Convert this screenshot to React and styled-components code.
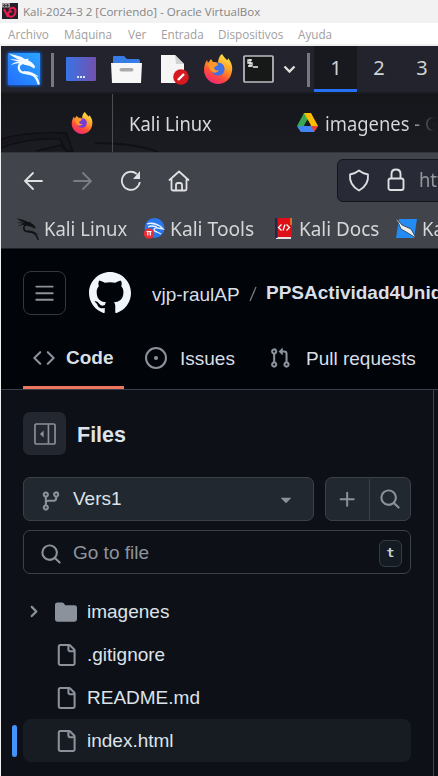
import React from "react";
import styled, { createGlobalStyle } from "styled-components";

const GlobalStyle = createGlobalStyle`
  * { box-sizing: border-box; }
  body { margin: 0; background: #0d1117; overflow: hidden; }
  svg { display: block; flex: none; }
`;

const Window = styled.main`
  width: 438px;
  height: 776px;
  overflow: hidden;
  background: #f2f2f2;
`;

const Label = styled.span`
  flex: none;
  white-space: nowrap;
  margin-left: ${(p) => p.$gap || 0}px;
  margin-top: ${(p) => p.$drop || 0}px;
  width: ${(p) => (p.$width ? `${p.$width}px` : "auto")};
  font-weight: ${(p) => (p.$bold ? 700 : 400)};
`;

const NarrowLabel = styled(Label)`
  transform: scaleX(${(p) => p.$scale || 0.92});
  transform-origin: left center;
`;

const Glyph = styled.svg`
  margin-left: ${(p) => p.$gap || 0}px;
  margin-top: ${(p) => p.$drop || 0}px;
`;

const TitleBar = styled.header`
  display: flex;
  align-items: center;
  height: 23px;
  background: #f2f2f2;
  color: #858585;
  font: 11.55px/22px "Open Sans", "Noto Sans", sans-serif;
`;

const MenuBar = styled.nav`
  display: flex;
  align-items: center;
  height: 23px;
  background: #fff;
  border-bottom: 2px solid #f0f0f0;
  color: #a0a0a0;
  font: 11.7px/20px "Open Sans", "Noto Sans", sans-serif;
`;

const Guest = styled.div`
  height: 730px;
  border-left: 1px solid #f0f0f0;
  background: #0d1117;
  overflow: hidden;
`;

const Panel = styled.div`
  display: flex;
  align-items: center;
  height: 48px;
  background: #22232c;
  border-bottom: 2px solid #1a1b21;
`;

const Divider = styled.i`
  flex: none;
  width: 3px;
  height: 34px;
  margin-top: 1px;
  margin-left: ${(p) => p.$gap}px;
  background: #77787c;
`;

const Workspace = styled.div`
  flex: none;
  width: 43px;
  height: 46px;
  margin-left: ${(p) => p.$gap || 0}px;
  padding: 1px 0 0 1px;
  background: ${(p) => (p.$active ? "#18191f" : "transparent")};
  border-bottom: 3px solid ${(p) => (p.$active ? "#2670f2" : "transparent")};
  color: #d0d2d4;
  font: 20px/42px "Noto Sans", sans-serif;
  text-align: center;
`;

const TabStrip = styled.div`
  position: relative;
  display: flex;
  align-items: center;
  height: 59px;
  background: linear-gradient(#15161a, #1b1c22);
  border-bottom: 1px solid #33353a;
  color: #d8d9da;
  font: 20px/57px "Noto Sans", sans-serif;
`;

const Wallpaper = styled.svg`
  position: absolute;
  inset: 0;
`;

const TabRule = styled.i`
  flex: none;
  position: relative;
  width: 1px;
  height: 58px;
  margin-left: 19px;
  background: #4c4d51;
`;

const FadedLabel = styled(NarrowLabel)`
  background: linear-gradient(90deg, #d8d9da 72%, #1b1c22 96%);
  background-clip: text;
  color: transparent;
`;

const NavBar = styled.div`
  display: flex;
  align-items: center;
  height: 56px;
  padding-bottom: 1px;
  background: #42444b;
`;

const AddressBar = styled.div`
  display: flex;
  align-items: center;
  flex: none;
  width: 120px;
  height: 43px;
  margin-top: -1px;
  margin-left: 147px;
  background: #282a35;
  border: 1px solid #15161a;
  border-radius: 6px;
  color: #96989e;
  font: 20px/40px "Noto Sans", sans-serif;
`;

const Bookmarks = styled.div`
  display: flex;
  align-items: center;
  height: 40px;
  background: #42444b;
  border-bottom: 1px solid #202126;
  color: #d5d6d8;
  font: 20px/36px "Noto Sans", sans-serif;
`;

const RepoHeader = styled.header`
  height: 141px;
  background: #010409;
  border-bottom: 1px solid #3a4049;
  color: #d9dfe6;
  font: 19px/28px "Liberation Sans", Arial, sans-serif;
`;

const Crumbs = styled.div`
  display: flex;
  align-items: center;
  height: 90px;
  padding-left: 22px;
`;

const MenuButton = styled.div`
  display: grid;
  place-items: center;
  flex: none;
  width: 43px;
  height: 44px;
  margin-top: -2px;
  border: 1px solid #33383f;
  border-radius: 8px;
`;

const RepoTabs = styled.div`
  display: flex;
  height: 50px;
  padding-left: 22px;
`;

const RepoTab = styled.div`
  display: flex;
  align-items: center;
  flex: none;
  width: ${(p) => p.$width}px;
  height: 50px;
  padding-bottom: 9px;
  border-bottom: 3px solid ${(p) => (p.$active ? "#ee765f" : "transparent")};
`;

const Files = styled.section`
  display: flex;
  flex-direction: column;
  width: 433px;
  height: 386px;
  padding: 22px 22px 0 11px;
  border-right: 1px solid #3d444d;
  background: #0d1117;
  color: #dde3ea;
  font: 19px/42px "Liberation Sans", Arial, sans-serif;
`;

const FilesHeader = styled.div`
  display: flex;
  align-items: center;
  flex: none;
  height: 43px;
  padding-left: 11px;
  font-size: 21.5px;
`;

const PanelButton = styled.div`
  display: grid;
  place-items: center;
  width: 43px;
  height: 43px;
  border-radius: 7px;
  background: #23272f;
`;

const Controls = styled.div`
  display: grid;
  grid-template-columns: 291px 86px;
  gap: 11px;
  flex: none;
  height: 43px;
  margin: 22px 0 0 11px;
`;

const Box = styled.div`
  display: flex;
  align-items: center;
  border: 1px solid ${(p) => (p.$search ? "#3b424a" : "#3a4148")};
  border-radius: 7px;
  background: ${(p) => (p.$search ? "#0d1117" : "#212830")};
`;

const SearchBox = styled(Box)`
  flex: none;
  height: 44px;
  margin: 10px 0 0 11px;
  color: #8d949d;
`;

const SplitCell = styled.div`
  display: grid;
  place-items: center;
  width: ${(p) => p.$width}px;
  height: 41px;
  border-right: ${(p) => (p.$rule ? "1px solid #3a4148" : "none")};
`;

const Key = styled.kbd`
  width: 23px;
  height: 27px;
  margin-top: 2px;
  margin-left: auto;
  margin-right: 8px;
  border: 1px solid #333b43;
  border-radius: 6px;
  background: #151b23;
  color: #cdd3da;
  font: bold 13px/24px "DejaVu Sans Mono", monospace;
  text-align: center;
`;

const Tree = styled.div`
  margin-top: 16px;
`;

const TreeRow = styled.div`
  display: grid;
  grid-template-columns: 5px 6px 1fr;
  align-items: center;
  height: 43px;
`;

const Marker = styled.i`
  width: 5px;
  height: 32px;
  border-radius: 3px;
  background: ${(p) => (p.$active ? "#4493f8" : "transparent")};
`;

const Entry = styled.div`
  grid-column: 3;
  display: grid;
  grid-template-columns: 5px 28px 31px 1fr;
  align-items: center;
  height: 43px;
  border-radius: 8px;
  background: ${(p) => (p.$active ? "#171b22" : "transparent")};
`;

const EntryIcon = styled.div`
  display: grid;
  place-items: center start;
`;

const icons = {
  bars: "M1 2.75A.75.75 0 0 1 1.75 2h12.5a.75.75 0 0 1 0 1.5H1.75A.75.75 0 0 1 1 2.75Zm0 5A.75.75 0 0 1 1.75 7h12.5a.75.75 0 0 1 0 1.5H1.75A.75.75 0 0 1 1 7.75ZM1.75 12h12.5a.75.75 0 0 1 0 1.5H1.75a.75.75 0 0 1 0-1.5Z",
  github: "M8 0c4.42 0 8 3.58 8 8a8.013 8.013 0 0 1-5.45 7.59c-.4.08-.55-.17-.55-.38 0-.27.01-1.13.01-2.2 0-.75-.25-1.23-.54-1.48 1.78-.2 3.65-.88 3.65-3.95 0-.88-.31-1.59-.82-2.15.08-.2.36-1.02-.08-2.12 0 0-.67-.22-2.2.82-.64-.18-1.32-.27-2-.27-.68 0-1.36.09-2 .27-1.53-1.03-2.2-.82-2.2-.82-.44 1.1-.16 1.92-.08 2.12-.51.56-.82 1.28-.82 2.15 0 3.06 1.86 3.75 3.64 3.95-.23.2-.44.55-.51 1.07-.46.21-1.61.55-2.33-.66-.15-.24-.6-.83-1.23-.82-.67.01-.27.38.01.53.34.19.73.9.82 1.13.16.45.68 1.31 2.69.94 0 .67.01 1.3.01 1.49 0 .21-.15.45-.55.38A7.995 7.995 0 0 1 0 8c0-4.42 3.58-8 8-8Z",
  code: "m11.28 3.22 4.25 4.25a.75.75 0 0 1 0 1.06l-4.25 4.25a.749.749 0 0 1-1.275-.326.749.749 0 0 1 .215-.734L13.94 8l-3.72-3.72a.749.749 0 0 1 .326-1.275.749.749 0 0 1 .734.215Zm-6.56 0a.751.751 0 0 1 1.042.018.751.751 0 0 1 .018 1.042L2.06 8l3.72 3.72a.749.749 0 0 1-.326 1.275.749.749 0 0 1-.734-.215L.47 8.53a.75.75 0 0 1 0-1.06Z",
  issue: "M8 9.5a1.5 1.5 0 1 0 0-3 1.5 1.5 0 0 0 0 3ZM8 0a8 8 0 1 1 0 16A8 8 0 0 1 8 0ZM1.5 8a6.5 6.5 0 1 0 13 0 6.5 6.5 0 0 0-13 0Z",
  pull: "M1.5 3.25a2.25 2.25 0 1 1 3 2.122v5.256a2.251 2.251 0 1 1-1.5 0V5.372A2.25 2.25 0 0 1 1.5 3.25Zm5.677-.177L9.573.677A.25.25 0 0 1 10 .854V2.5h1A2.5 2.5 0 0 1 13.5 5v5.628a2.251 2.251 0 1 1-1.5 0V5a1 1 0 0 0-1-1h-1v1.646a.25.25 0 0 1-.427.177L7.177 3.427a.25.25 0 0 1 0-.354ZM3.75 2.5a.75.75 0 1 0 0 1.5.75.75 0 0 0 0-1.5Zm0 9.5a.75.75 0 1 0 0 1.5.75.75 0 0 0 0-1.5Zm8.25.75a.75.75 0 1 0 1.5 0 .75.75 0 0 0-1.5 0Z",
  branch: "M9.5 3.25a2.25 2.25 0 1 1 3 2.122V6A2.5 2.5 0 0 1 10 8.5H6a1 1 0 0 0-1 1v1.128a2.251 2.251 0 1 1-1.5 0V5.372a2.25 2.25 0 1 1 1.5 0v1.836A2.493 2.493 0 0 1 6 7h4a1 1 0 0 0 1-1v-.628A2.25 2.25 0 0 1 9.5 3.25Zm-6 0a.75.75 0 1 0 1.5 0 .75.75 0 0 0-1.5 0Zm8.25-.75a.75.75 0 1 0 0 1.5.75.75 0 0 0 0-1.5ZM4.25 12a.75.75 0 1 0 0 1.5.75.75 0 0 0 0-1.5Z",
  search: "M10.68 11.74a6 6 0 0 1-7.922-8.982 6 6 0 0 1 8.982 7.922l3.04 3.04a.749.749 0 0 1-.326 1.275.749.749 0 0 1-.734-.215ZM11.5 7a4.499 4.499 0 1 0-8.997 0A4.499 4.499 0 0 0 11.5 7Z",
  plus: "M7.75 2a.75.75 0 0 1 .75.75V7h4.25a.75.75 0 0 1 0 1.5H8.5v4.25a.75.75 0 0 1-1.5 0V8.5H2.75a.75.75 0 0 1 0-1.5H7V2.75A.75.75 0 0 1 7.75 2Z",
  down: "m4.427 7.427 3.396 3.396a.25.25 0 0 0 .354 0l3.396-3.396A.25.25 0 0 0 11.396 7H4.604a.25.25 0 0 0-.177.427Z",
  file: "M2 1.75C2 .784 2.784 0 3.75 0h6.586c.464 0 .909.184 1.237.513l2.914 2.914c.329.328.513.773.513 1.237v9.586A1.75 1.75 0 0 1 13.25 16h-9.5A1.75 1.75 0 0 1 2 14.25Zm1.75-.25a.25.25 0 0 0-.25.25v12.5c0 .138.112.25.25.25h9.5a.25.25 0 0 0 .25-.25V6h-2.75A1.75 1.75 0 0 1 9 4.25V1.5Zm6.75.062V4.25c0 .138.112.25.25.25h2.688l-.011-.013-2.914-2.914-.013-.011Z",
  folder: "M1.75 1A1.75 1.75 0 0 0 0 2.75v10.5C0 14.216.784 15 1.75 15h12.5A1.75 1.75 0 0 0 16 13.25v-8.5A1.75 1.75 0 0 0 14.25 3H7.5a.25.25 0 0 1-.2-.1l-.9-1.2C6.07 1.26 5.55 1 5 1H1.75Z",
  chevron: "M4.7 10c-.2 0-.4-.1-.5-.2-.3-.3-.3-.8 0-1.1L6.9 6 4.2 3.3c-.3-.3-.3-.8 0-1.1.3-.3.8-.3 1.1 0l3.3 3.2c.3.3.3.8 0 1.1L5.3 9.7c-.2.2-.4.3-.6.3Z",
};

const Octicon = ({ name, size = 22, gap, drop, color = "#8b929b", box = 16 }) => (
  <Glyph $gap={gap} $drop={drop} width={size} height={size} viewBox={`0 0 ${box} ${box}`} fill={color}>
    <path d={icons[name]} />
  </Glyph>
);

const Dragon = ({ color }) => (
  <g fill={color}>
    <path d="M1 1C7 3 14 3 19 8L18 11C13 7 6 6 1 1Z" />
    <path d="M2 7C7 6 13 8 18 9L17 11.500C12 9 7 8 2 7Z" />
    <path d="M2.500 13C7 9 12 8 17 9.500L16 11.500C11 10 7 11 2.500 13Z" />
    <path d="M16 7 21 6 21 8C24 9 26 11 28 14L27 16 22.500 13.500 16 12Z" />
    <path d="M17 10C9 11 10 18 15 20C21 22 28 19 31.500 31" fill="none" stroke={color} strokeWidth="2.3" strokeLinecap="round" />
    <path d="M16 19C21 21 25 21 31 24L27 21.500C23 19 19 19 16 19Z" stroke={color} strokeWidth=".6" />
  </g>
);

const Firefox = ({ size, gap, drop, id }) => (
  <Glyph $gap={gap} $drop={drop} width={size} height={size} viewBox="0 0 30 30">
    <defs>
      <linearGradient id={id} x1=".8" y1="0" x2=".3" y2="1">
        <stop offset="0" stopColor="#fff04a" />
        <stop offset=".42" stopColor="#ff9b26" />
        <stop offset=".72" stopColor="#ff4b3a" />
        <stop offset="1" stopColor="#f0257d" />
      </linearGradient>
    </defs>
    <path fill={`url(#${id})`} d="M19 0c2 3 3 4 5 6 1 0 1-1 1-2 3 4 5 8 4 13-1 8-7 13-14 13S1 24 1 16c0-4 1-7 3-10l1 3 3-4 2 3c2 0 4 0 5 1 0-3 1-7 4-9Z" />
    <circle cx="15" cy="15" r="6.6" fill={id === "fox-tab" ? "#763bdc" : "#3f70e6"} />
    <path fill="#ff9829" d="M5 9c4-1 8-1 10 1 0 2-3 2-4 4 1 2 2 3 5 2-3 5-10 3-11-7Z" />
  </Glyph>
);

const bookmarkIcons = {
  linux: (
    <Glyph $gap={15} width="23" height="24" viewBox="0 0 33 33"><Dragon color="#111216" /></Glyph>
  ),
  tools: (
    <Glyph $gap={15} width="23" height="23" viewBox="0 0 23 23">
      <circle cx="11.5" cy="11" r="10" fill="#2878ed" />
      <path d="M4 7c5-2 9 0 13 2l3 3-5-1c-5-1-5 3-1 4l4 2M5 10c3-2 6-1 9 0" fill="none" stroke="#e7f1ff" strokeWidth="1.3" />
      <circle cx="6" cy="16.500" r="5.200" fill="#e92e35" />
      <path d="M3.500 14.500h5M4.800 14.500v4M7.300 14.500v4" stroke="#fff" strokeWidth="1.2" />
    </Glyph>
  ),
  docs: (
    <Glyph $gap={14} width="22" height="23" viewBox="0 0 22 23">
      <path fill="#e8e0e0" d="M4 18h15v4H4z" />
      <path fill="#dc1016" d="M4 1h16v19H4z" />
      <path fill="#232745" d="M3 1h2.500v20H3z" />
      <path d="m9.500 7.500-3 3 3 3m5-6 3 3-3 3m-1.500-6-2 6" fill="none" stroke="#fff" strokeWidth="1.3" />
      <path d="M19 1v7" stroke="#e98628" strokeWidth="1.5" />
    </Glyph>
  ),
};

const Kali = () => (
  <Glyph $gap={3} width="40" height="40" viewBox="0 0 40 40">
    <defs>
      <linearGradient id="kali-blue" x1="1" y1="0" x2="0" y2="1">
        <stop stopColor="#2aa5ff" /><stop offset="1" stopColor="#236fff" />
      </linearGradient>
      <filter id="kali-glow" x="-20%" y="-20%" width="140%" height="140%"><feGaussianBlur stdDeviation="1.8" /></filter>
    </defs>
    <rect x="3" y="3" width="34" height="34" rx="3" fill="#1962dc" filter="url(#kali-glow)" />
    <rect x="4" y="4" width="32" height="32" rx="1" fill="url(#kali-blue)" />
    <g transform="translate(4 3.5) scale(.97 1)"><Dragon color="#f5faff" /></g>
  </Glyph>
);

const tree = [
  { name: "imagenes", folder: true },
  { name: ".gitignore" },
  { name: "README.md" },
  { name: "index.html", active: true },
];

export default function App() {
  return (
    <Window>
      <GlobalStyle />
      <TitleBar>
        <Glyph $gap={2} $drop={-1} width="16" height="16" viewBox="0 0 16 16">
          <path fill="#24212c" d="M0 0h16v16H0z" />
          <path d="M7 7C10 3 14 5 13.500 9s-4 6-6.500 4 0-6 3-4M2 6l4 8" stroke="#ed1c4f" strokeWidth="2" fill="none" />
          <path fill="#9a9698" d="M0 0h8v4.500H0z" />
          <path d="M1 2.500h6M2.500 1v3M5.500 1v3" stroke="#363139" strokeWidth=".8" />
        </Glyph>
        <Label $gap={5}>Kali-2024-3 2 [Corriendo] - Oracle VirtualBox</Label>
      </TitleBar>
      <MenuBar>
        <Label $gap={8} $width={56}>Archivo</Label>
        <Label $width={64}>Máquina</Label>
        <Label $width={33}>Ver</Label>
        <Label $width={57}>Entrada</Label>
        <Label $width={80}>Dispositivos</Label>
        <Label>Ayuda</Label>
      </MenuBar>
      <Guest>
        <Panel>
          <Kali />
          <Divider $gap={7} />
          <Glyph $gap={12} width="30" height="24" viewBox="0 0 30 24">
            <defs><linearGradient id="desk"><stop stopColor="#3974e5" /><stop offset="1" stopColor="#7350ae" /></linearGradient></defs>
            <rect width="30" height="24" rx="1" fill="url(#desk)" />
            <path d="M11 20h8" stroke="#dce2ff" strokeWidth="2" strokeDasharray="2 1" />
          </Glyph>
          <Glyph $gap={15} width="31" height="29" viewBox="0 0 31 29">
            <path fill="#377be6" d="M2 2q0-1 1-1h10l3 3h11q2 0 2 2v7H2Z" />
            <path fill="#f7f7f7" d="M0 8h31l-1 20H1Z" />
            <rect x="8.5" y="13" width="14" height="3.6" rx="1.8" fill="#aaa" />
          </Glyph>
          <Glyph $gap={18} width="29" height="31" viewBox="0 0 29 31">
            <path fill="#f5f5f5" d="M1 1h14l9 9v19H1Z" />
            <path fill="#d2d2d2" d="m15 1 9 9h-8Z" />
            <circle cx="21" cy="23" r="7.8" fill="#d71920" />
            <path d="m18 26 6-6" stroke="#fff" strokeWidth="2.4" />
          </Glyph>
          <Firefox size={30} gap={14} id="fox-panel" />
          <Glyph $gap={10} width="31" height="28" viewBox="0 0 31 28">
            <rect x="1" y="1" width="29" height="26" rx="1" fill="#171818" stroke="#bcbec2" strokeWidth="1.7" />
            <path d="M9 5H5v3h4v3H5M7 4v8M10 12h5" stroke="#eee" strokeWidth="1.3" fill="none" />
          </Glyph>
          <Glyph $gap={9} width="13" height="12" viewBox="0 0 13 12"><path d="m1.500 3.500 5 5 5-5" fill="none" stroke="#e0e0e0" strokeWidth="2.3" /></Glyph>
          <Divider $gap={11} />
          <Workspace $gap={4} $active>1</Workspace>
          <Workspace>2</Workspace>
          <Workspace>3</Workspace>
        </Panel>
        <TabStrip>
          <Wallpaper width="437" height="58" viewBox="0 0 437 58">
            <path d="M0 45Q28 37 65 39l7 18h-7l-6-12Q25 44 0 54ZM35 57l25-6 6 6" fill="#111217" stroke="#0e0f13" strokeWidth="1.4" fillOpacity=".5" />
            <path d="M94 49c24 0 48 3 63 9" fill="none" stroke="#101116" strokeWidth="2" />
          </Wallpaper>
          <Firefox size={22} gap={70} id="fox-tab" />
          <TabRule />
          <NarrowLabel $gap={16} $width={168}>Kali Linux</NarrowLabel>
          <Glyph width="21" height="20" viewBox="0 0 21 20">
            <path fill="#38a852" d="M7 0h7L4 19l-4-6Z" />
            <path fill="#fbbc04" d="M7 0h7l7 13h-7Z" />
            <path fill="#4285f4" d="M3.500 13H21l-4 6H4l-3.500-5Z" />
            <path fill="#ea4335" d="M14 13h7l-4 6Z" />
            <path fill="#1a1b20" d="m10.500 6.500 3.500 6H7Z" />
          </Glyph>
          <FadedLabel $gap={7}>imagenes - G</FadedLabel>
        </TabStrip>
        <NavBar>
          <Glyph $gap={22} width="21" height="20" viewBox="0 0 21 20" fill="none" stroke="#e0e1e2" strokeWidth="1.8" strokeLinecap="round"><path d="M19 10H2m8-8-8 8 8 8" /></Glyph>
          <Glyph $gap={28} width="21" height="20" viewBox="0 0 21 20" fill="none" stroke="#7b7d82" strokeWidth="1.8" strokeLinecap="round"><path d="M2 10h17m-8-8 8 8-8 8" /></Glyph>
          <Glyph $gap={27} width="22" height="22" viewBox="0 0 22 22" fill="none" stroke="#e0e1e2" strokeWidth="1.8"><path d="M19.8 12a9 9 0 1 1-3-8" /><path fill="#e0e1e2" stroke="none" d="M20 1v8h-7Z" /></Glyph>
          <Glyph $gap={26} width="22" height="22" viewBox="0 0 22 22" fill="none" stroke="#e0e1e2" strokeWidth="1.8" strokeLinecap="round" strokeLinejoin="round"><path d="M1.5 10 11 1.5l9.5 8.5M3.5 9v10q0 1.500 1.500 1.500h12q1.500 0 1.500-1.500V9M8 20v-5q0-2 2-2h2q2 0 2 2v5" /></Glyph>
          <AddressBar>
            <Glyph $gap={10} width="22" height="23" viewBox="0 0 22 23" fill="none" stroke="#dedfe0" strokeWidth="1.8" strokeLinejoin="round"><path d="M11 1.500C14 4 17 5 20 5.500Q21 16 11 21.500Q1 16 2 5.500C5 5 8 4 11 1.500Z" /></Glyph>
            <Glyph $gap={17} width="18" height="24" viewBox="0 0 18 24" fill="none" stroke="#dedfe0" strokeWidth="1.9"><rect x="1.500" y="10.500" width="15" height="11.500" rx="2" /><path d="M4.500 10V6q0-4.500 4.500-4.500T13.500 6v4" /></Glyph>
            <NarrowLabel $gap={14}>https</NarrowLabel>
          </AddressBar>
        </NavBar>
        <Bookmarks>
          {bookmarkIcons.linux}<NarrowLabel $scale={0.925} $gap={5} $width={84}>Kali Linux</NarrowLabel>
          {bookmarkIcons.tools}<NarrowLabel $scale={0.96} $gap={4} $width={88}>Kali Tools</NarrowLabel>
          {bookmarkIcons.docs}<NarrowLabel $scale={0.945} $gap={5} $width={81}>Kali Docs</NarrowLabel>
          <Glyph $gap={15} width="23" height="23" viewBox="0 0 23 23">
            <path fill="#238bf4" d="M4 2h18l-3 19H1Z" />
            <path d="m1 1 6 7 9 4 5 9-8-5-7-4-3-7" fill="#e9eef2" stroke="#303238" strokeWidth=".8" />
          </Glyph>
          <NarrowLabel $gap={4}>Kali Forums</NarrowLabel>
        </Bookmarks>
        <RepoHeader>
          <Crumbs>
            <MenuButton><Octicon name="bars" size={21} /></MenuButton>
            <Octicon name="github" size={42} gap={23} color="#f0f6fc" drop={-2} />
            <Label $gap={21} $drop={1} $width={97}>vjp-raulAP</Label>
            <Glyph width="8" height="18" viewBox="0 0 8 18"><path d="M7 2 1 16" stroke="#737a83" strokeWidth="1.3" /></Glyph>
            <Label $gap={9} $drop={-2} $bold>PPSActividad4Unidad</Label>
          </Crumbs>
          <RepoTabs>
            <RepoTab $width={101} $active><Octicon name="code" gap={10} /><Label $gap={11} $bold>Code</Label></RepoTab>
            <RepoTab $width={124}><Octicon name="issue" gap={21} /><Label $gap={13} $drop={1}>Issues</Label></RepoTab>
            <RepoTab $width={190}><Octicon name="pull" gap={21} /><Label $gap={15} $drop={1}>Pull requests</Label></RepoTab>
          </RepoTabs>
        </RepoHeader>
        <Files>
          <FilesHeader>
            <PanelButton>
              <svg width="22" height="22" viewBox="0 0 16 16" fill="none" stroke="#8b929b" strokeWidth="1.2"><rect x=".7" y=".7" width="14.600" height="14.600" rx="1" /><path d="M10.500 1v14" /><path fill="#8b929b" stroke="none" d="M7 5.500v5L4.300 8Z" /></svg>
            </PanelButton>
            <Label $gap={11} $drop={2} $bold>Files</Label>
          </FilesHeader>
          <Controls>
            <Box><Octicon name="branch" gap={16} drop={4} /><Label $gap={11} $width={202}>Vers1</Label><Octicon name="down" /></Box>
            <Box>
              <SplitCell $width={44} $rule><Octicon name="plus" size={21} /></SplitCell>
              <SplitCell $width={40}><Octicon name="search" /></SplitCell>
            </Box>
          </Controls>
          <SearchBox $search><Octicon name="search" gap={16} drop={4} /><Label $gap={11} $drop={2}>Go to file</Label><Key>t</Key></SearchBox>
          <Tree>
            {tree.map((item) => (
              <TreeRow key={item.name}>
                <Marker $active={item.active} />
                <Entry $active={item.active}>
                  <i />
                  <EntryIcon>{item.folder && <Octicon name="chevron" box={12} size={17} gap={-3} />}</EntryIcon>
                  <EntryIcon><Octicon name={item.folder ? "folder" : "file"} gap={-1} /></EntryIcon>
                  <Label>{item.name}</Label>
                </Entry>
              </TreeRow>
            ))}
          </Tree>
        </Files>
      </Guest>
    </Window>
  );
}
